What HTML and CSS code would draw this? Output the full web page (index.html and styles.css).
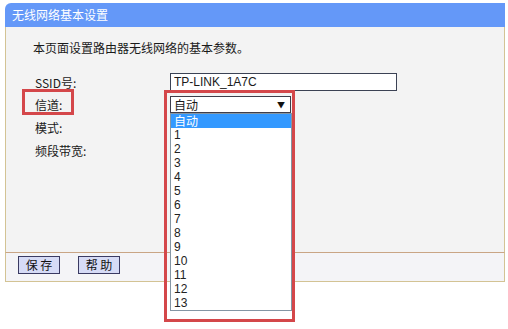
FILE: index.html
```html
<!DOCTYPE html>
<html lang="zh-CN">
<head>
    <meta charset="UTF-8">
    <title>无线网络基本设置</title>
    <link rel="stylesheet" href="styles.css">
</head>
<body>

<div class="panel">
    <div class="panel-title">无线网络基本设置</div>

    <div class="panel-body">
        <p class="intro">本页面设置路由器无线网络的基本参数。</p>

        <div class="form">
            <div class="row">
                <span class="label">SSID号:</span>
                <input class="text-input" type="text" value="TP-LINK_1A7C">
            </div>
            <div class="row">
                <span class="label marked">信道:</span>
                <div class="select-wrap">
                    <div class="select">自动<span class="arrow">&#9660;</span></div>
                    <!-- open dropdown list -->
                    <ul class="options">
                        <li class="active">自动</li>
                        <li>1</li>
                        <li>2</li>
                        <li>3</li>
                        <li>4</li>
                        <li>5</li>
                        <li>6</li>
                        <li>7</li>
                        <li>8</li>
                        <li>9</li>
                        <li>10</li>
                        <li>11</li>
                        <li>12</li>
                        <li>13</li>
                    </ul>
                    <div class="mark-box"></div>
                </div>
            </div>
            <div class="row">
                <span class="label">模式:</span>
                <div class="select"></div>
            </div>
            <div class="row">
                <span class="label">频段带宽:</span>
                <div class="select"></div>
            </div>
        </div>
    </div>

    <div class="panel-foot">
        <button class="btn">保 存</button>
        <button class="btn">帮 助</button>
    </div>
</div>

</body>
</html>
```

FILE: styles.css
```css
html, body {
    min-height: 329px;
}
body {
    margin: 0;
    background: #ffffff;
    font-family: "Noto Sans CJK SC", "Liberation Sans", sans-serif;
    font-size: 12px;
    color: #1a1a1a;
}
.panel {
    width: 500px;
    margin: 3px 0 0 5px;
}
.panel-title {
    height: 24px;
    line-height: 24px;
    padding-left: 7px;
    background: #6498f8;
    color: #ffffff;
    font-size: 12px;
    border-radius: 6px 0 0 0;
}
.panel-body {
    height: 225px;
    background: #f3f3f3;
    border-left: 1px solid #d3c394;
    border-right: 1px solid #d3c394;
    box-sizing: border-box;
    padding-top: 13px;
}
.intro {
    margin: 0;
    padding-left: 27px;
    line-height: 16px;
}
.form {
    margin-top: 15px;
    padding-left: 29px;
}
.row {
    display: flex;
    align-items: center;
    height: 22px;
}
.row + .row + .row {
    margin-top: 1px;
}
.label {
    width: 135px;
    flex: none;
    position: relative;
}
.label.marked::after {
    content: "";
    position: absolute;
    left: -13px;
    top: -7px;
    width: 46px;
    height: 20px;
    border: 3px solid #d4474a;
}
.text-input {
    width: 227px;
    height: 18px;
    box-sizing: border-box;
    margin: 0;
    padding: 0 3px;
    border: 1px solid #3b4254;
    background: #ffffff;
    font-family: "Liberation Sans", Arial, sans-serif;
    font-size: 12px;
    color: #1a1a1a;
}
.select-wrap {
    position: relative;
}
.select {
    width: 121px;
    height: 17px;
    box-sizing: border-box;
    border: 1px solid #3d3d4a;
    background: #ffffff;
    padding-left: 3px;
    line-height: 15px;
    display: flex;
    justify-content: space-between;
}
.arrow {
    font-size: 8px;
    padding-right: 5px;
    color: #111;
}
.options {
    position: absolute;
    left: 0;
    top: 17px;
    width: 120px;
    margin: 0;
    padding: 0;
    list-style: none;
    background: #ffffff;
    border: 1px solid #8496a4;
    font-family: "Liberation Sans", Arial, sans-serif;
    font-size: 12px;
    color: #222;
    z-index: 2;
}
.options li {
    height: 14px;
    line-height: 14px;
    padding-left: 3px;
}
.options li.active {
    background: #3399ff;
    color: #ffffff;
    font-family: "Noto Sans CJK SC", sans-serif;
}
.mark-box {
    position: absolute;
    left: -6px;
    top: -6px;
    width: 125px;
    height: 226px;
    border: 3px solid #d4474a;
    z-index: 3;
}
.panel-foot {
    height: 25px;
    background: #f4f4f7;
    border-top: 1px solid #c9a585;
    border-left: 1px solid #d3c394;
    border-right: 1px solid #d3c394;
    border-bottom: 1px solid #d3c394;
    display: flex;
    align-items: flex-start;
    gap: 18px;
    padding: 3px 0 0 12px;
}
.btn {
    width: 42px;
    height: 18px;
    margin: 0;
    padding: 0;
    border: 1px solid #3a3a62;
    background: #d6dbf6;
    font-family: "Noto Sans CJK SC", sans-serif;
    font-size: 12px;
    line-height: 16px;
    color: #111;
}
```
